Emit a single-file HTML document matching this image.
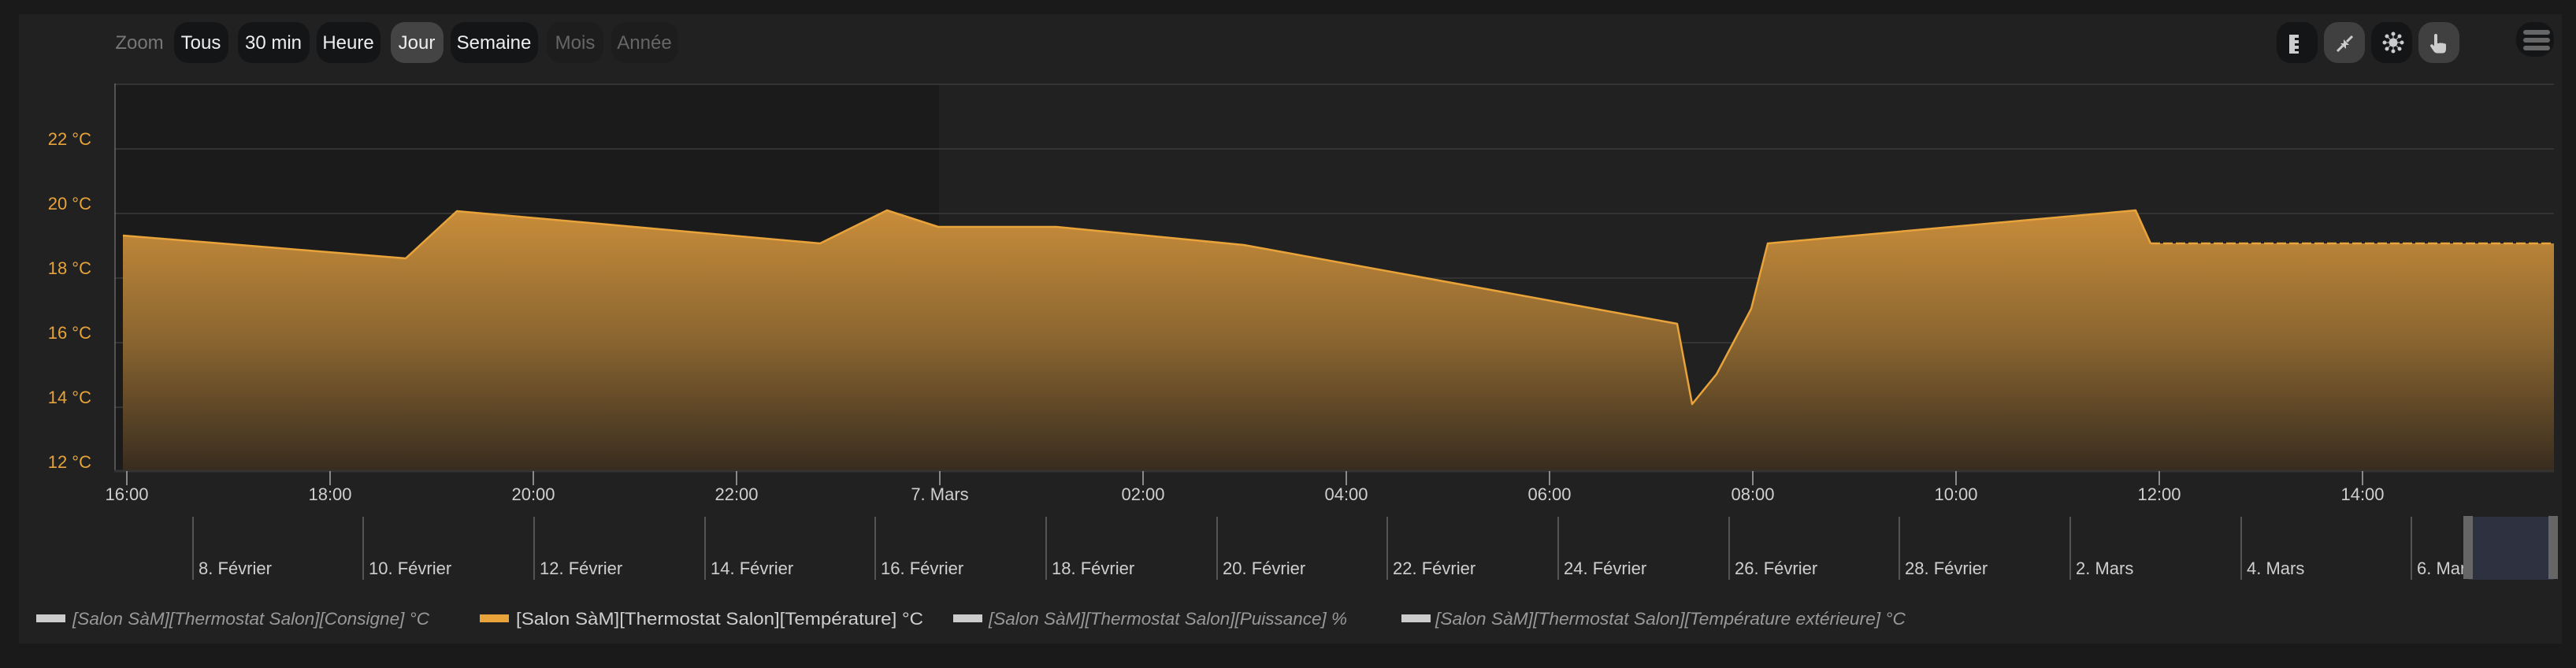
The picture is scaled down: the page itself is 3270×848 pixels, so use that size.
<!DOCTYPE html>
<html><head><meta charset="utf-8"><style>
html,body{margin:0;padding:0;background:#1a1a1a;width:3270px;height:848px;overflow:hidden}
svg{display:block}
text{font-family:"Liberation Sans Narrow","Liberation Sans",sans-serif}
</style></head><body>
<svg width="3270" height="848" viewBox="0 0 3270 848" xmlns="http://www.w3.org/2000/svg">
<defs>
<linearGradient id="fillg" gradientUnits="userSpaceOnUse" x1="0" y1="267" x2="0" y2="597">
<stop offset="0" stop-color="#c98d3a"/>
<stop offset="0.5" stop-color="#8a6530"/>
<stop offset="1" stop-color="#382c1f"/>
</linearGradient>
</defs>
<rect x="0" y="0" width="3270" height="848" fill="#1a1a1a"/>
<rect x="24" y="18" width="3228" height="799" fill="#212121"/>
<rect x="145" y="106" width="1047" height="491" fill="#1b1b1b"/>
<g stroke="#333" stroke-width="2">
<line x1="145" y1="107" x2="3242" y2="107"/>
<line x1="145" y1="189" x2="3242" y2="189"/>
<line x1="145" y1="271" x2="3242" y2="271"/>
<line x1="145" y1="353" x2="3242" y2="353"/>
<line x1="145" y1="435" x2="3242" y2="435"/>
<line x1="145" y1="517" x2="3242" y2="517"/>
</g>
<line x1="146" y1="106" x2="146" y2="597" stroke="#666" stroke-width="1.5"/>
<path d="M156,299 L515,328 L580,268 L1041,309 L1126,267 L1191,288 L1341,288 L1579,311 L2129,411 L2148,513 L2179,475 L2223,392 L2244,309 L2711,267 L2730,309 L3242,309 L3242,597 L156,597 Z" fill="url(#fillg)"/>
<path d="M156,299 L515,328 L580,268 L1041,309 L1126,267 L1191,288 L1341,288 L1579,311 L2129,411 L2148,513 L2179,475 L2223,392 L2244,309 L2711,267 L2730,309" fill="none" stroke="#e8a33a" stroke-width="2.5" stroke-linejoin="round"/>
<line x1="2730" y1="309" x2="3242" y2="309" stroke="#e8a33a" stroke-width="2.5" stroke-dasharray="12,4"/>
<line x1="145" y1="598" x2="3242" y2="598" stroke="#333" stroke-width="3"/>
<g fill="#e8a33a" font-size="22" text-anchor="end">
<text x="116" y="184">22 °C</text>
<text x="116" y="266">20 °C</text>
<text x="116" y="348">18 °C</text>
<text x="116" y="430">16 °C</text>
<text x="116" y="512">14 °C</text>
<text x="116" y="594">12 °C</text>
</g>
<g stroke="#aaa" stroke-width="1.5">
<line x1="161" y1="598" x2="161" y2="616"/><line x1="419" y1="598" x2="419" y2="616"/>
<line x1="677" y1="598" x2="677" y2="616"/><line x1="935" y1="598" x2="935" y2="616"/>
<line x1="1193" y1="598" x2="1193" y2="616"/><line x1="1451" y1="598" x2="1451" y2="616"/>
<line x1="1709" y1="598" x2="1709" y2="616"/><line x1="1967" y1="598" x2="1967" y2="616"/>
<line x1="2225" y1="598" x2="2225" y2="616"/><line x1="2483" y1="598" x2="2483" y2="616"/>
<line x1="2741" y1="598" x2="2741" y2="616"/><line x1="2999" y1="598" x2="2999" y2="616"/>
</g>
<g fill="#cfcfcf" font-size="22" text-anchor="middle">
<text x="161" y="635">16:00</text><text x="419" y="635">18:00</text><text x="677" y="635">20:00</text>
<text x="935" y="635">22:00</text><text x="1193" y="635">7. Mars</text><text x="1451" y="635">02:00</text>
<text x="1709" y="635">04:00</text><text x="1967" y="635">06:00</text><text x="2225" y="635">08:00</text>
<text x="2483" y="635">10:00</text><text x="2741" y="635">12:00</text><text x="2999" y="635">14:00</text>
</g>
<g stroke="#666" stroke-width="1.5">
<line x1="245" y1="656" x2="245" y2="736"/><line x1="461" y1="656" x2="461" y2="736"/>
<line x1="678" y1="656" x2="678" y2="736"/><line x1="895" y1="656" x2="895" y2="736"/>
<line x1="1111" y1="656" x2="1111" y2="736"/><line x1="1328" y1="656" x2="1328" y2="736"/>
<line x1="1545" y1="656" x2="1545" y2="736"/><line x1="1761" y1="656" x2="1761" y2="736"/>
<line x1="1978" y1="656" x2="1978" y2="736"/><line x1="2195" y1="656" x2="2195" y2="736"/>
<line x1="2411" y1="656" x2="2411" y2="736"/><line x1="2628" y1="656" x2="2628" y2="736"/>
<line x1="2845" y1="656" x2="2845" y2="736"/><line x1="3061" y1="656" x2="3061" y2="736"/>
</g>
<g fill="#cfcfcf" font-size="22">
<text x="252" y="729">8. Février</text><text x="468" y="729">10. Février</text>
<text x="685" y="729">12. Février</text><text x="902" y="729">14. Février</text>
<text x="1118" y="729">16. Février</text><text x="1335" y="729">18. Février</text>
<text x="1552" y="729">20. Février</text><text x="1768" y="729">22. Février</text>
<text x="1985" y="729">24. Février</text><text x="2202" y="729">26. Février</text>
<text x="2418" y="729">28. Février</text><text x="2635" y="729">2. Mars</text>
<text x="2852" y="729">4. Mars</text><text x="3068" y="729">6. Mars</text>
</g>
<rect x="3133" y="656" width="109" height="80" fill="#2e3240"/>
<rect x="3127" y="655" width="12" height="80" fill="#666"/>
<rect x="3235" y="655" width="12" height="80" fill="#666"/>
<rect x="46" y="780" width="37" height="10" fill="#cccccc"/>
<text x="92" y="793" fill="#999" font-size="22" font-style="italic" textLength="453" lengthAdjust="spacingAndGlyphs">[Salon SàM][Thermostat Salon][Consigne] °C</text>
<rect x="609" y="780" width="37" height="10" fill="#e8a33a"/>
<text x="655" y="793" fill="#cfcfcf" font-size="22" textLength="517" lengthAdjust="spacingAndGlyphs">[Salon SàM][Thermostat Salon][Température] °C</text>
<rect x="1210" y="780" width="37" height="10" fill="#cccccc"/>
<text x="1255" y="793" fill="#999" font-size="22" font-style="italic" textLength="455" lengthAdjust="spacingAndGlyphs">[Salon SàM][Thermostat Salon][Puissance] %</text>
<rect x="1779" y="780" width="37" height="10" fill="#cccccc"/>
<text x="1822" y="793" fill="#999" font-size="22" font-style="italic" textLength="597" lengthAdjust="spacingAndGlyphs">[Salon SàM][Thermostat Salon][Température extérieure] °C</text>
<g font-size="24" text-anchor="middle">
<text x="177" y="62" fill="#777">Zoom</text>
<rect x="221" y="28" width="69" height="52" rx="18" fill="#141517"/><text x="255" y="62" fill="#eee">Tous</text>
<rect x="302" y="28" width="91" height="52" rx="18" fill="#141517"/><text x="347" y="62" fill="#eee">30 min</text>
<rect x="402" y="28" width="81" height="52" rx="18" fill="#141517"/><text x="442" y="62" fill="#eee">Heure</text>
<rect x="496" y="28" width="67" height="52" rx="18" fill="#444"/><text x="529" y="62" fill="#eee">Jour</text>
<rect x="572" y="28" width="111" height="52" rx="18" fill="#141517"/><text x="627" y="62" fill="#eee">Semaine</text>
<rect x="694" y="28" width="72" height="52" rx="18" fill="#1d1d1d"/><text x="730" y="62" fill="#666">Mois</text>
<rect x="776" y="28" width="85" height="52" rx="18" fill="#1d1d1d"/><text x="818" y="62" fill="#666">Année</text>
</g>
<rect x="2890" y="28" width="52" height="52" rx="18" fill="#141517"/>
<path d="M2906,44 h12 v4 h-5 v3 h5 v4 h-5 v3 h5 v4 h-5 v3 h5 v3 h-12 z" fill="#ccc"/>
<rect x="2950" y="28" width="52" height="52" rx="18" fill="#404040"/>
<g stroke="#ccc" stroke-width="3" fill="#ccc">
<line x1="2967" y1="65" x2="2974" y2="58"/><path d="M2971,55 l7,0 l0,7 z" stroke="none"/>
<line x1="2986" y1="46" x2="2979" y2="53"/><path d="M2975,50 l0,7 l7,0 z" stroke="none"/>
</g>
<rect x="3010" y="28" width="52" height="52" rx="18" fill="#141517"/>
<g fill="#ccc" stroke="#ccc" stroke-width="1">
<circle cx="3038" cy="54" r="5"/>
<circle cx="3038" cy="43" r="2"/><circle cx="3038" cy="65" r="2"/>
<circle cx="3027" cy="54" r="2"/><circle cx="3049" cy="54" r="2"/>
<circle cx="3030" cy="46" r="2"/><circle cx="3046" cy="46" r="2"/>
<circle cx="3030" cy="62" r="2"/><circle cx="3046" cy="62" r="2"/>
<line x1="3038" y1="43" x2="3038" y2="65"/><line x1="3027" y1="54" x2="3049" y2="54"/>
<line x1="3030" y1="46" x2="3046" y2="62"/><line x1="3046" y1="46" x2="3030" y2="62"/>
</g>
<rect x="3070" y="28" width="52" height="52" rx="18" fill="#404040"/>
<path d="M3090,45 a2,2 0 0 1 4,0 v10 h2 a2,2 0 0 1 3,0 a2,2 0 0 1 3,0.5 a2,2 0 0 1 3,1 v6 q0,5 -5,5 h-6 q-3,0 -5,-3 l-4,-6 a2,2 0 0 1 3,-2 l2,2 z" fill="#ccc"/>
<rect x="3194" y="28" width="48" height="44" rx="20" fill="#141517"/>
<rect x="3203" y="38" width="34" height="6" rx="3" fill="#666"/>
<rect x="3203" y="48" width="34" height="6" rx="3" fill="#666"/>
<rect x="3203" y="58" width="34" height="6" rx="3" fill="#666"/>
</svg>
</body></html>
